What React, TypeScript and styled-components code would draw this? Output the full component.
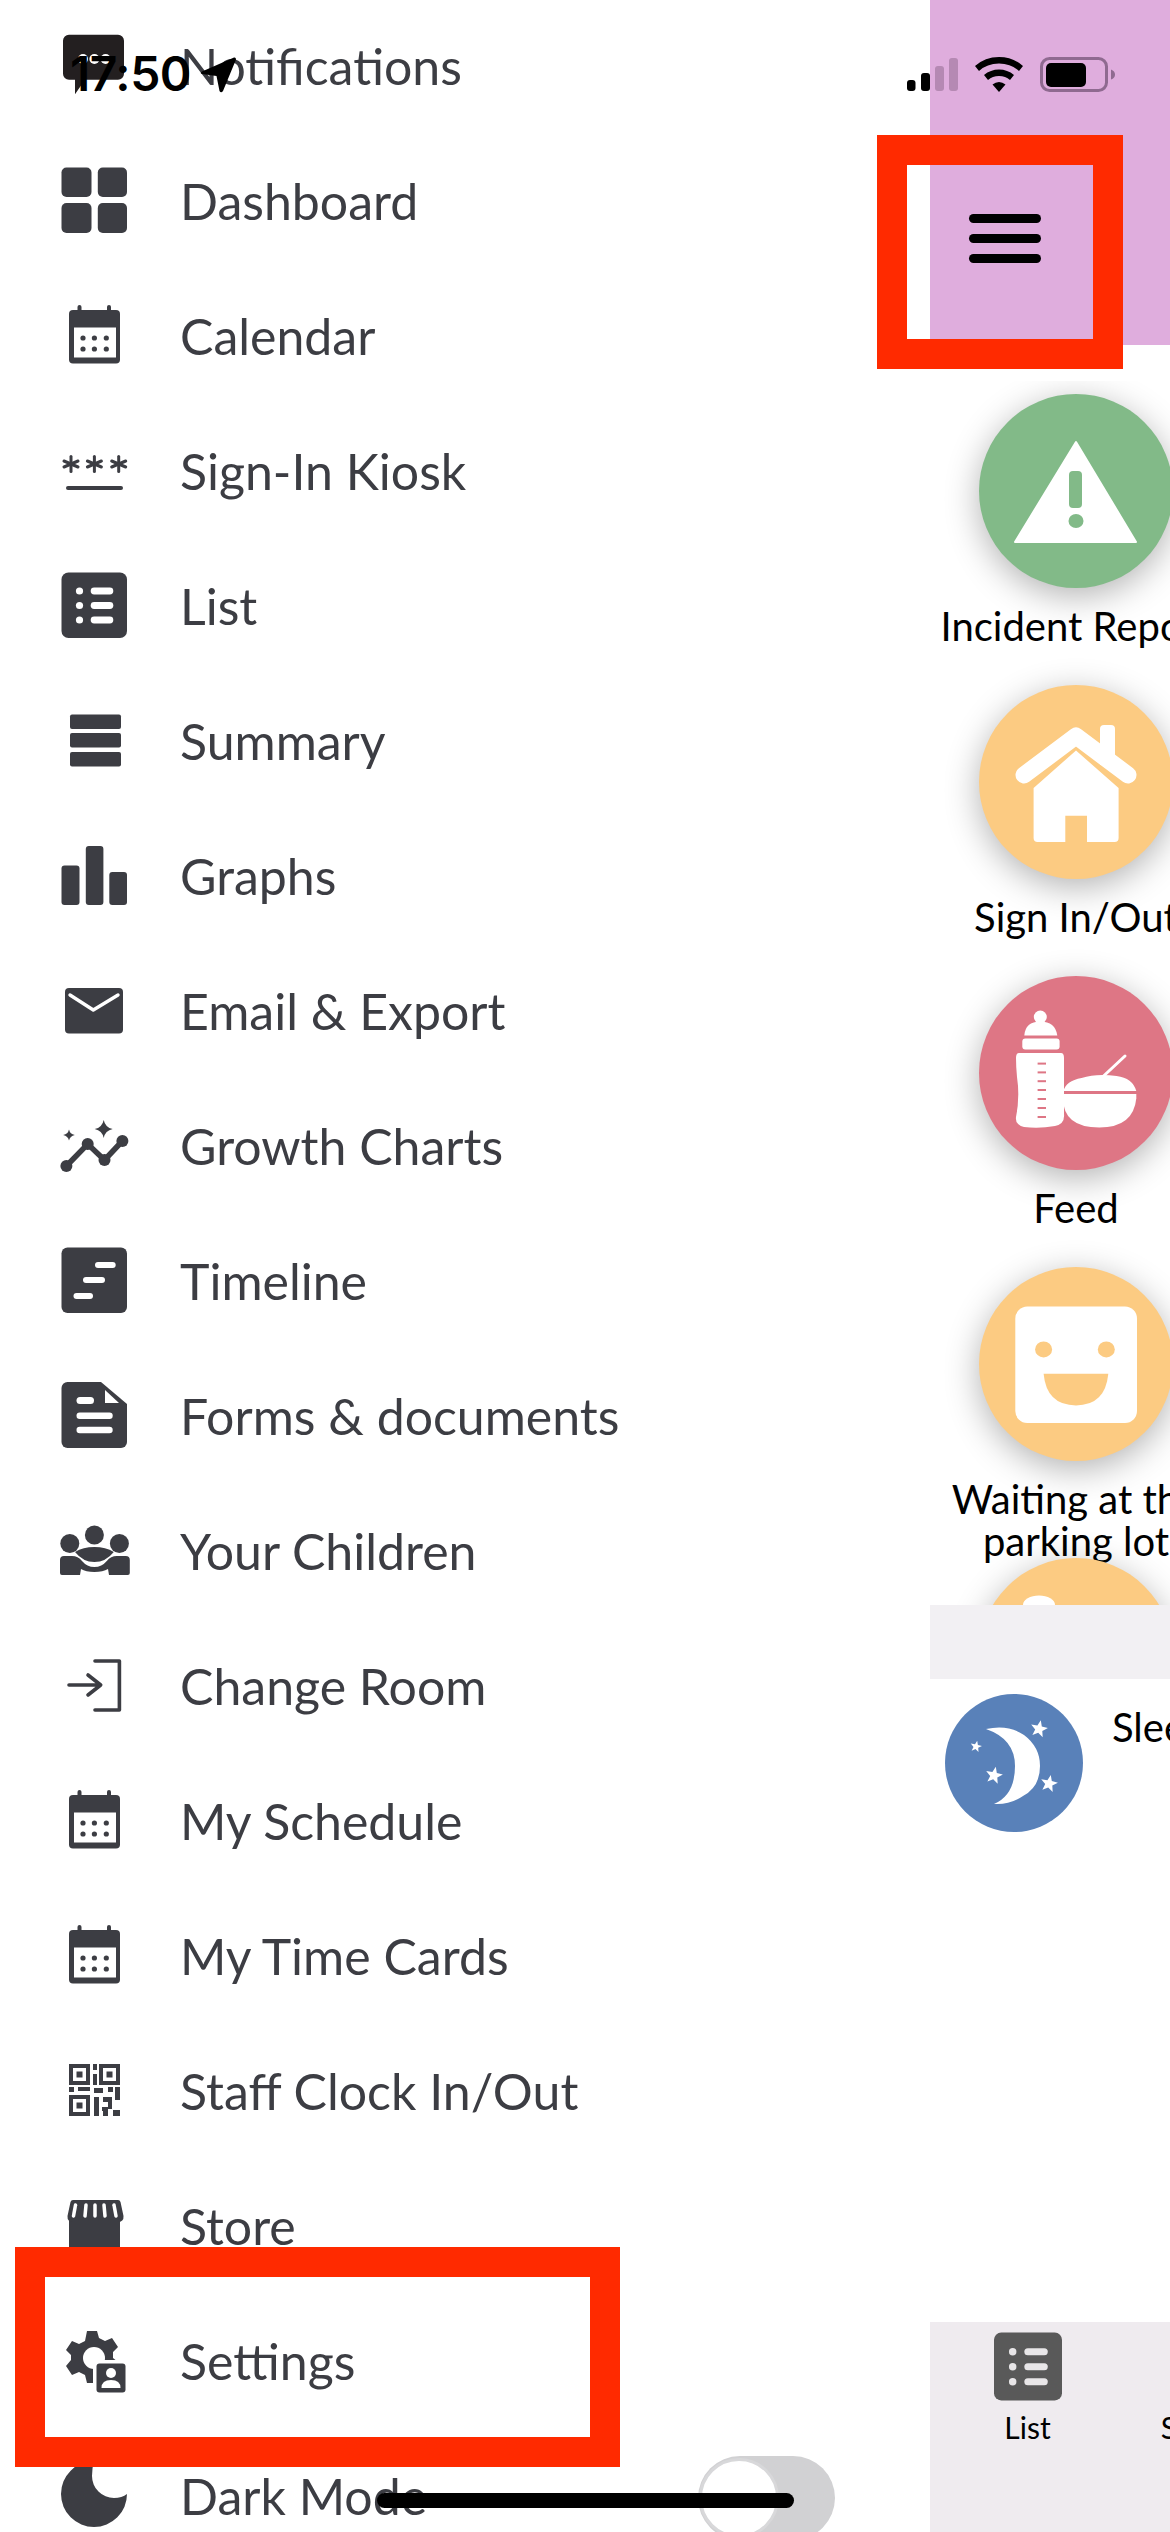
import React from "react";
import styled, {createGlobalStyle} from "styled-components";

const GlobalStyle = createGlobalStyle`
    html, body {
        margin: 0;
        padding: 0;
        background: #fff;
    }
    * {
        box-sizing: border-box;
    }
`;

const Page = styled.div`
    position: relative;
    display: flex;
    width: 1170px;
    height: 2532px;
    overflow: hidden;
    background: #fff;
    font-family: Lato, "Noto Sans", sans-serif;
`;

// left drawer

const Drawer = styled.nav`
    width: 930px;
    flex: none;
    display: flex;
    flex-direction: column;
`;

const MenuRow = styled.div`
    height: 135px;
    flex: none;
    display: flex;
    align-items: center;
    gap: 48px;
    padding: 0 95px 0 56px;
    color: #3c3d43;
`;

const MenuLabel = styled.span`
    font-size: 50px;
    line-height: 60px;
    margin-top: -3px;
    white-space: nowrap;
`;

const Glyph = styled.svg<{$dark?: boolean}>`
    width: 76px;
    height: 76px;
    flex: none;
    overflow: visible;
    fill: ${props => props.$dark ? "#231f20" : "#3c3d43"};
    stroke: none;
`;

const Toggle = styled.div`
    position: relative;
    width: 137px;
    height: 84px;
    margin-left: auto;
    border-radius: 42px;
    background: #d1d1d3;
`;

const ToggleKnob = styled.div`
    position: absolute;
    top: 2px;
    left: 1px;
    width: 80px;
    height: 80px;
    border-radius: 50%;
    background: #fff;
    border: 3px solid #d8d8da;
`;

// right side, the screen behind the drawer

const Main = styled.main`
    width: 240px;
    flex: none;
    display: flex;
    flex-direction: column;
    overflow: hidden;
`;

const Header = styled.header`
    height: 345px;
    flex: none;
    display: flex;
    justify-content: flex-start;
    background: #dfaddd;
    padding: 214px 0 0 39px;
`;

const Burger = styled.div`
    width: 72px;
    display: flex;
    flex-direction: column;
    gap: 11px;
`;

const BurgerBar = styled.div`
    height: 9px;
    border-radius: 5px;
    background: #000;
`;

const ActionList = styled.div`
    margin-top: 36px;
    height: 1224px;
    flex: none;
    overflow: hidden;
    padding-top: 13px;
    display: flex;
    flex-direction: column;
`;

const Action = styled.div`
    width: 292px;
    height: 291px;
    flex: none;
    display: flex;
    flex-direction: column;
    align-items: center;
`;

const ActionCircle = styled.div<{$color: string}>`
    width: 194px;
    height: 194px;
    flex: none;
    border-radius: 50%;
    background: ${props => props.$color};
    box-shadow: 0 8px 34px rgba(0, 0, 0, 0.3);
`;

const CircleArt = styled.svg`
    display: block;
    width: 100%;
    height: 100%;
    fill: #fff;
`;

const ActionLabel = styled.div`
    margin-top: 17px;
    font-size: 40px;
    line-height: 42px;
    text-align: center;
    color: #000;
`;

const Band = styled.div`
    height: 74px;
    flex: none;
    background: #f2f0f3;
`;

const SleepRow = styled.div`
    display: flex;
    align-items: flex-start;
    gap: 29px;
    padding: 15px 0 0 15px;
`;

const SleepCircle = styled.div`
    width: 138px;
    height: 138px;
    flex: none;
    border-radius: 50%;
    background: #5981b9;
`;

const SleepLabel = styled.div`
    margin-top: 11px;
    font-size: 40px;
    line-height: 44px;
    color: #000;
    white-space: nowrap;
`;

const TabBar = styled.div`
    margin-top: auto;
    height: 210px;
    flex: none;
    display: flex;
    background: #efebef;
`;

const Tab = styled.div`
    width: 195px;
    flex: none;
    display: flex;
    flex-direction: column;
    align-items: center;
    padding-top: 10px;
    gap: 8px;
`;

const TabIcon = styled.svg`
    width: 68px;
    height: 69px;
    display: block;
    fill: #595959;
`;

const TabLabel = styled.div`
    font-size: 30px;
    line-height: 36px;
    color: #000;
`;

// things lying over the page

const StatusBar = styled.div`
    position: absolute;
    top: 52px;
    left: 70px;
    right: 55px;
    height: 44px;
    display: flex;
    align-items: center;
    color: #000;
`;

const Clock = styled.div`
    font-family: Inter, "Liberation Sans", sans-serif;
    font-size: 48px;
    font-weight: 600;
    line-height: 44px;
    letter-spacing: -0.5px;
`;

const ArrowIcon = styled.svg`
    width: 37px;
    height: 37px;
    margin-left: 9px;
    fill: #000;
`;

const StatusRight = styled.div`
    margin-left: auto;
    display: flex;
    align-items: center;
    gap: 17px;
`;

const SignalIcon = styled.svg`
    width: 51px;
    height: 33px;
    display: block;
`;

const WifiIcon = styled.svg`
    width: 48px;
    height: 35px;
    display: block;
    fill: #000;
`;

const BatteryIcon = styled.svg`
    width: 75px;
    height: 35px;
    display: block;
`;

const RedFrame = styled.div<{$kind: "menu" | "settings"}>`
    position: absolute;
    border: 30px solid #ff2a00;
    left: ${props => props.$kind === "menu" ? "877px" : "15px"};
    top: ${props => props.$kind === "menu" ? "135px" : "2247px"};
    width: ${props => props.$kind === "menu" ? "246px" : "605px"};
    height: ${props => props.$kind === "menu" ? "234px" : "220px"};
`;

const HomeIndicator = styled.div`
    position: absolute;
    left: 377px;
    top: 2493px;
    width: 417px;
    height: 15px;
    border-radius: 8px;
    background: #000;
`;

// menu icons, all on a 76 box

const Icon = ({children, dark}: {children: React.ReactNode; dark?: boolean}) => (
    <Glyph viewBox="0 0 76 76" $dark={dark}>{children}</Glyph>
);

const NotificationsIcon = () => (
    <Icon dark>
        <path d="M13 4.7h49a6 6 0 0 1 6 6v33a6 6 0 0 1-6 6H29l-10 14.5V49.7h-6a6 6 0 0 1-6-6v-33a6 6 0 0 1 6-6z" />
        <circle cx="27" cy="29" r="5" fill="#fff" />
        <circle cx="38.4" cy="29" r="5" fill="#fff" />
        <circle cx="49.6" cy="29" r="5" fill="#fff" />
    </Icon>
);

const DashboardIcon = () => (
    <Icon>
        <rect x="5.5" y="2.5" width="30" height="29.5" rx="5" />
        <rect x="41.8" y="2.5" width="29.2" height="29.5" rx="5" />
        <rect x="5.5" y="38" width="30" height="30" rx="5" />
        <rect x="41.8" y="38" width="29.2" height="30" rx="5" />
    </Icon>
);

const CalendarIcon = () => (
    <Icon>
        <rect x="21.5" y="5" width="4" height="8" rx="2" />
        <rect x="51" y="5" width="4" height="8" rx="2" />
        <rect x="13" y="10" width="51" height="53.5" rx="4" />
        <rect x="18" y="27.5" width="42" height="30" fill="#fff" />
        {[27, 38.4, 50.3].map(x => [38, 49].map(y => <circle key={`${x}-${y}`} cx={x} cy={y} r="2.6" />))}
    </Icon>
);

const KioskIcon = () => (
    <Icon>
        <g stroke="#3c3d43" strokeWidth="3" strokeLinecap="round">
            {[15, 38.4, 62.7].map(x => (
                <g key={x}>
                    <line x1={x} y1="21.5" x2={x} y2="36.5" />
                    <line x1={x - 7} y1="26" x2={x + 7} y2="32" />
                    <line x1={x + 7} y1="26" x2={x - 7} y2="32" />
                </g>
            ))}
        </g>
        <rect x="10" y="51" width="57" height="4" rx="2" />
    </Icon>
);

const ListGlyph = ({light}: {light: string}) => (
    <>
        <rect x="5.5" y="2.5" width="65.5" height="65.5" rx="7" />
        {[21, 35.5, 50].map(y => (
            <g key={y} fill={light}>
                <circle cx="23.5" cy={y} r="3.6" />
                <rect x="34.7" y={y - 3.4} width="22.6" height="6.8" rx="3.4" />
            </g>
        ))}
    </>
);

const ListIcon = () => <Icon><ListGlyph light="#fff" /></Icon>;

const SummaryIcon = () => (
    <Icon>
        <rect x="14" y="9.5" width="51" height="14.5" rx="2" />
        <rect x="14" y="28" width="51" height="14.5" rx="2" />
        <rect x="14" y="47" width="51" height="14.5" rx="2" />
    </Icon>
);

const GraphsIcon = () => (
    <Icon>
        <rect x="5.5" y="25.5" width="18" height="39.5" rx="3" />
        <rect x="29.8" y="6" width="17.6" height="59" rx="3" />
        <rect x="53.3" y="32" width="17.7" height="33" rx="3" />
    </Icon>
);

const EmailIcon = () => (
    <Icon>
        <rect x="9" y="13" width="58" height="45.6" rx="4" />
        <path d="M14 20l23.3 15L62 20" fill="none" stroke="#fff" strokeWidth="3.4" strokeLinecap="round" strokeLinejoin="round" />
    </Icon>
);

const GrowthIcon = () => (
    <Icon>
        <path d="M10.4 56L31.7 34l16.8 16L66.4 31" fill="none" stroke="#3c3d43" strokeWidth="5.5" />
        <circle cx="10.4" cy="56" r="6" />
        <circle cx="31.7" cy="34" r="6" />
        <circle cx="48.5" cy="50" r="6" />
        <circle cx="66.4" cy="31" r="6" />
        <path d="M47.7 10q1.5 7.5 9 9q-7.5 1.5-9 9q-1.5-7.5-9-9q7.500-1.5 9-9z" />
        <path d="M13 19.5q1 4.5 5.8 5.5q-4.8 1-5.8 5.5q-1-4.5-5.8-5.5q4.8-1 5.8-5.5z" />
    </Icon>
);

const TimelineIcon = () => (
    <Icon>
        <rect x="5.5" y="2.5" width="65.5" height="65.5" rx="6" />
        <rect x="39" y="17" width="20.7" height="6" rx="3" fill="#fff" />
        <rect x="27" y="32" width="22" height="6" rx="3" fill="#fff" />
        <rect x="17.5" y="48" width="19.5" height="6" rx="3" fill="#fff" />
    </Icon>
);

const FormsIcon = () => (
    <Icon>
        <path d="M11.5 2H45L71 24v38a6 6 0 0 1-6 6H11.5a6 6 0 0 1-6-6V8a6 6 0 0 1 6-6z" />
        <path d="M49 10v13h14z" fill="#fff" />
        <rect x="20.5" y="17" width="17.5" height="7" rx="3.5" fill="#fff" />
        <rect x="20.5" y="32.5" width="36.2" height="6.5" rx="3.25" fill="#fff" />
        <rect x="20.5" y="46.7" width="36.2" height="6.5" rx="3.25" fill="#fff" />
    </Icon>
);

const ChildrenIcon = () => (
    <Icon>
        <circle cx="38.4" cy="20" r="9.5" />
        <circle cx="13.8" cy="28.5" r="9.5" />
        <circle cx="63.4" cy="28.5" r="9.5" />
        <path d="M4 45a4 4 0 0 1 4-4h8q6 0 10 5 5 6 12.4 6 7.4 0 12.4-6 4-5 10-5h9a4 4 0 0 1 4 4v13a2 2 0 0 1-2 2H53l-1-6q-5 3-13.6 3-8.6 0-13.4-3l-1 6H6a2 2 0 0 1-2-2z" />
        <path d="M19 37q8-5 19.4-5 11.4 0 19.4 5-8 10-19.4 10-11.4 0-19.4-10z" />
    </Icon>
);

const ChangeRoomIcon = () => (
    <Icon>
        <g fill="none" stroke="#3c3d43" strokeWidth="3.6" strokeLinecap="round" strokeLinejoin="round">
            <path d="M39 11h24.4v49H39" />
            <path d="M13 35h31.7M32 25l12.7 10L32 45" />
        </g>
    </Icon>
);

const QrIcon = () => (
    <Icon>
        <path fillRule="evenodd" d="M13 9h21v21H13zM17 13v13h13V13zM43 9h21v21H43zM47 13v13h13V13zM13 40h21v21H13zM17 44v13h13V44z" />
        <rect x="20.5" y="16.5" width="6" height="6" />
        <rect x="50.5" y="16.5" width="6" height="6" />
        <rect x="20.5" y="47.5" width="6" height="6" />
        <path d="M37 9h4v6h-4zM37 19h4v11h-4zM13 32h5v5h-5zM22 32h12v4H22zM38 33h9v5h-9zM52 32h5v5h-5zM59 32h5v13h-5zM38 42h5v19h-5zM47 42h9v5h-9zM52 47h4v7h-4zM46 52h6v4h-6zM47 56h5v5h-5zM57 55h7v6h-7z" />
    </Icon>
);

const StoreIcon = () => (
    <Icon>
        <rect x="13" y="28" width="51" height="34" />
        <path d="M15 10h47q2 0 2.5 2l3 14q.5 6-6 6h-44q-6.5 0-6-6l3-14q.5-2 2.5-2z" />
        <g stroke="#fff" strokeWidth="3.5" strokeLinecap="round">
            <line x1="19.5" y1="15" x2="17.5" y2="26" />
            <line x1="30" y1="15" x2="29" y2="26" />
            <line x1="39" y1="15" x2="39" y2="26" />
            <line x1="48" y1="15" x2="49" y2="26" />
            <line x1="58" y1="15" x2="60" y2="26" />
        </g>
    </Icon>
);

const SettingsIcon = () => (
    <Icon>
        <path d="M31 6h10l2 7 6 3 7-3 6 9-5 5v6l5 4-4 8-7-2-5 3-2 7-2 5H31l-2-8-6-3-7 3-6-9 5-6v-5l-5-5 6-9 7 3 6-3z" />
        <circle cx="38" cy="33" r="11" fill="#fff" />
        <rect x="37" y="35" width="35" height="34" rx="2" fill="#fff" />
        <rect x="40.5" y="38.5" width="29" height="29" rx="3" />
        <circle cx="55" cy="48" r="5" fill="#fff" />
        <path d="M45.5 63q0-8 9.500-8t9.500 8z" fill="#fff" />
    </Icon>
);

const MoonIcon = () => (
    <Icon>
        <path fillRule="evenodd" d="M38 1a33 33 0 1 0 33 33H71q-5 4-13 4a22 22 0 0 1-22-22q0-8 2-15z" />
    </Icon>
);

const menu: {label: string; icon: React.ComponentType}[] = [
    {label: "Notifications", icon: NotificationsIcon},
    {label: "Dashboard", icon: DashboardIcon},
    {label: "Calendar", icon: CalendarIcon},
    {label: "Sign-In Kiosk", icon: KioskIcon},
    {label: "List", icon: ListIcon},
    {label: "Summary", icon: SummaryIcon},
    {label: "Graphs", icon: GraphsIcon},
    {label: "Email & Export", icon: EmailIcon},
    {label: "Growth Charts", icon: GrowthIcon},
    {label: "Timeline", icon: TimelineIcon},
    {label: "Forms & documents", icon: FormsIcon},
    {label: "Your Children", icon: ChildrenIcon},
    {label: "Change Room", icon: ChangeRoomIcon},
    {label: "My Schedule", icon: CalendarIcon},
    {label: "My Time Cards", icon: CalendarIcon},
    {label: "Staff Clock In/Out", icon: QrIcon},
    {label: "Store", icon: StoreIcon},
    {label: "Settings", icon: SettingsIcon},
];

// art inside the round action buttons, 194 box

const WarningArt = () => (
    <CircleArt viewBox="0 0 194 194">
        <path d="M97 48L157 148H36z" stroke="#fff" strokeWidth="2" strokeLinejoin="round" />
        <rect x="90" y="77" width="13" height="37" rx="4" fill="#82ba88" />
        <ellipse cx="97" cy="127" rx="7.5" ry="7" fill="#82ba88" />
    </CircleArt>
);

const HouseArt = () => (
    <CircleArt viewBox="0 0 194 194">
        <path d="M121 44a4 4 0 0 1 4-4h7a4 4 0 0 1 4 4v36h-15z" />
        <path d="M45 90L97 51l52 39" fill="none" stroke="#fff" strokeWidth="17" strokeLinecap="round" strokeLinejoin="round" />
        <path d="M54.6 103L97 65.5 139.6 103v50a4 4 0 0 1-4 4H108v-26.3H86.3V157H58.6a4 4 0 0 1-4-4z" />
    </CircleArt>
);

const FeedArt = () => (
    <CircleArt viewBox="0 0 194 194">
        <circle cx="61.3" cy="41" r="6.5" />
        <path d="M45.300 59.500q1-14 16-14t17 14z" />
        <rect x="43.3" y="62.6" width="37.3" height="11" rx="3" />
        <path d="M40 77h42q3 0 3 5v56q1 10-9 12-16 3-31 1-9-2-8-10 4-20 1-40-1-10-1-19 0-5 3-5z" />
        {[86.6, 95.4, 104.2, 113, 122, 131, 140].map(y => (
            <rect key={y} x="58.6" y={y} width="8.4" height="2" fill="#de7685" />
        ))}
        <path d="M84.600 115q2-10 18-13 15-5 35-2 16 2 19.700 15z" />
        <path d="M84 118h73.3v4.500q-3 29-37 29-36 0-36.300-29z" />
        <line x1="124.6" y1="100" x2="146" y2="80" stroke="#fff" strokeWidth="3" strokeLinecap="round" />
    </CircleArt>
);

const FaceArt = () => (
    <CircleArt viewBox="0 0 194 194">
        <rect x="36.3" y="39.5" width="121.7" height="116.5" rx="12" />
        <ellipse cx="64.6" cy="82.4" rx="8.5" ry="8" fill="#fccb82" />
        <ellipse cx="127.3" cy="82.4" rx="8.5" ry="8" fill="#fccb82" />
        <path d="M64.6 106.8h64.7q-3 31.6-32.3 31.6-29.4 0-32.4-31.6z" fill="#fccb82" />
    </CircleArt>
);

const FifthArt = () => (
    <CircleArt viewBox="0 0 194 194">
        <ellipse cx="60" cy="47" rx="16" ry="9.5" />
    </CircleArt>
);

const starPoints = (cx: number, cy: number, r: number) => {
    const points: string[] = [];
    for (let i = 0; i < 10; i++) {
        const radius = i % 2 === 0 ? r : r * 0.42;
        const angle = -Math.PI / 2 + 0.2 + (i * Math.PI) / 5;
        points.push(`${(cx + radius * Math.cos(angle)).toFixed(1)},${(cy + radius * Math.sin(angle)).toFixed(1)}`);
    }
    return points.join(" ");
};

const SleepArt = () => (
    <CircleArt viewBox="0 0 138 138">
        <path d="M41 35q22-5 38 6 16 12 16 31 0 21-17 30-13 9-29 8 21-9 21-38 0-27-29-37z" />
        <polygon points={starPoints(94, 35, 9)} />
        <polygon points={starPoints(31, 52.6, 6)} />
        <polygon points={starPoints(49, 81.5, 9)} />
        <polygon points={starPoints(104, 89.7, 9)} />
    </CircleArt>
);

const actions: {label?: string; color: string; art: React.ComponentType}[] = [
    {label: "Incident Report", color: "#82ba88", art: WarningArt},
    {label: "Sign In/Out", color: "#fccb82", art: HouseArt},
    {label: "Feed", color: "#de7685", art: FeedArt},
    {label: "Waiting at the parking lot", color: "#fccb82", art: FaceArt},
    {color: "#fccb82", art: FifthArt},
];

export default function App() {
    return (
        <Page>
            <GlobalStyle />
            <Drawer>
                {menu.map(item => (
                    <MenuRow key={item.label}>
                        <item.icon />
                        <MenuLabel>{item.label}</MenuLabel>
                    </MenuRow>
                ))}
                <MenuRow>
                    <MoonIcon />
                    <MenuLabel>Dark Mode</MenuLabel>
                    <Toggle>
                        <ToggleKnob />
                    </Toggle>
                </MenuRow>
            </Drawer>

            <Main>
                <Header>
                    <Burger>
                        <BurgerBar />
                        <BurgerBar />
                        <BurgerBar />
                    </Burger>
                </Header>
                <ActionList>
                    {actions.map((action, i) => (
                        <Action key={i}>
                            <ActionCircle $color={action.color}>
                                <action.art />
                            </ActionCircle>
                            {action.label && <ActionLabel>{action.label}</ActionLabel>}
                        </Action>
                    ))}
                </ActionList>
                <Band />
                <SleepRow>
                    <SleepCircle>
                        <SleepArt />
                    </SleepCircle>
                    <SleepLabel>Sleep</SleepLabel>
                </SleepRow>
                <TabBar>
                    <Tab>
                        <TabIcon viewBox="5.5 2.5 65.5 65.5">
                            <ListGlyph light="#e8e6e8" />
                        </TabIcon>
                        <TabLabel>List</TabLabel>
                    </Tab>
                    <Tab>
                        <TabIcon viewBox="0 0 76 76" />
                        <TabLabel>Summary</TabLabel>
                    </Tab>
                </TabBar>
            </Main>

            <StatusBar>
                <Clock>17:50</Clock>
                <ArrowIcon viewBox="0 0 37 37">
                    <path d="M34 1.5L2 15.5q-2.5 1.5 0 2.5l14.5 2 3 15q1.500 2.500 3.500 0L36 3.500q0-2.500-2-2z" />
                </ArrowIcon>
                <StatusRight>
                    <SignalIcon viewBox="0 0 51 33">
                        <rect x="0" y="22" width="8.5" height="11" rx="3" fill="#000" />
                        <rect x="14" y="15" width="9" height="18" rx="3" fill="#000" />
                        <rect x="28" y="8" width="9" height="25" rx="3" fill="#b589b3" />
                        <rect x="42" y="0" width="9" height="33" rx="3" fill="#b589b3" />
                    </SignalIcon>
                    <WifiIcon viewBox="0 0 48 35">
                        <path d="M24 0q14 0 24 9l-4 5Q36 6.500 24 6.500T4 14L0 9Q10 0 24 0z" />
                        <path d="M24 12.500q8.500 0 15 5.500l-4 5q-4.500-4-11-4t-11 4l-4-5q6.500-5.500 15-5.500z" />
                        <path d="M24 25q3.500 0 6.500 2.500L24 35l-6.500-7.500Q20.500 25 24 25z" />
                    </WifiIcon>
                    <BatteryIcon viewBox="0 0 75 35">
                        <rect x="1.5" y="1.5" width="65" height="32" rx="8" fill="none" stroke="#8f6a90" strokeWidth="3" />
                        <rect x="6" y="6" width="40" height="24" rx="5" fill="#000" />
                        <path d="M71 12.500q4 1.500 4 5t-4 5z" fill="#8f6a90" />
                    </BatteryIcon>
                </StatusRight>
            </StatusBar>

            <RedFrame $kind="menu" />
            <RedFrame $kind="settings" />
            <HomeIndicator />
        </Page>
    );
}
